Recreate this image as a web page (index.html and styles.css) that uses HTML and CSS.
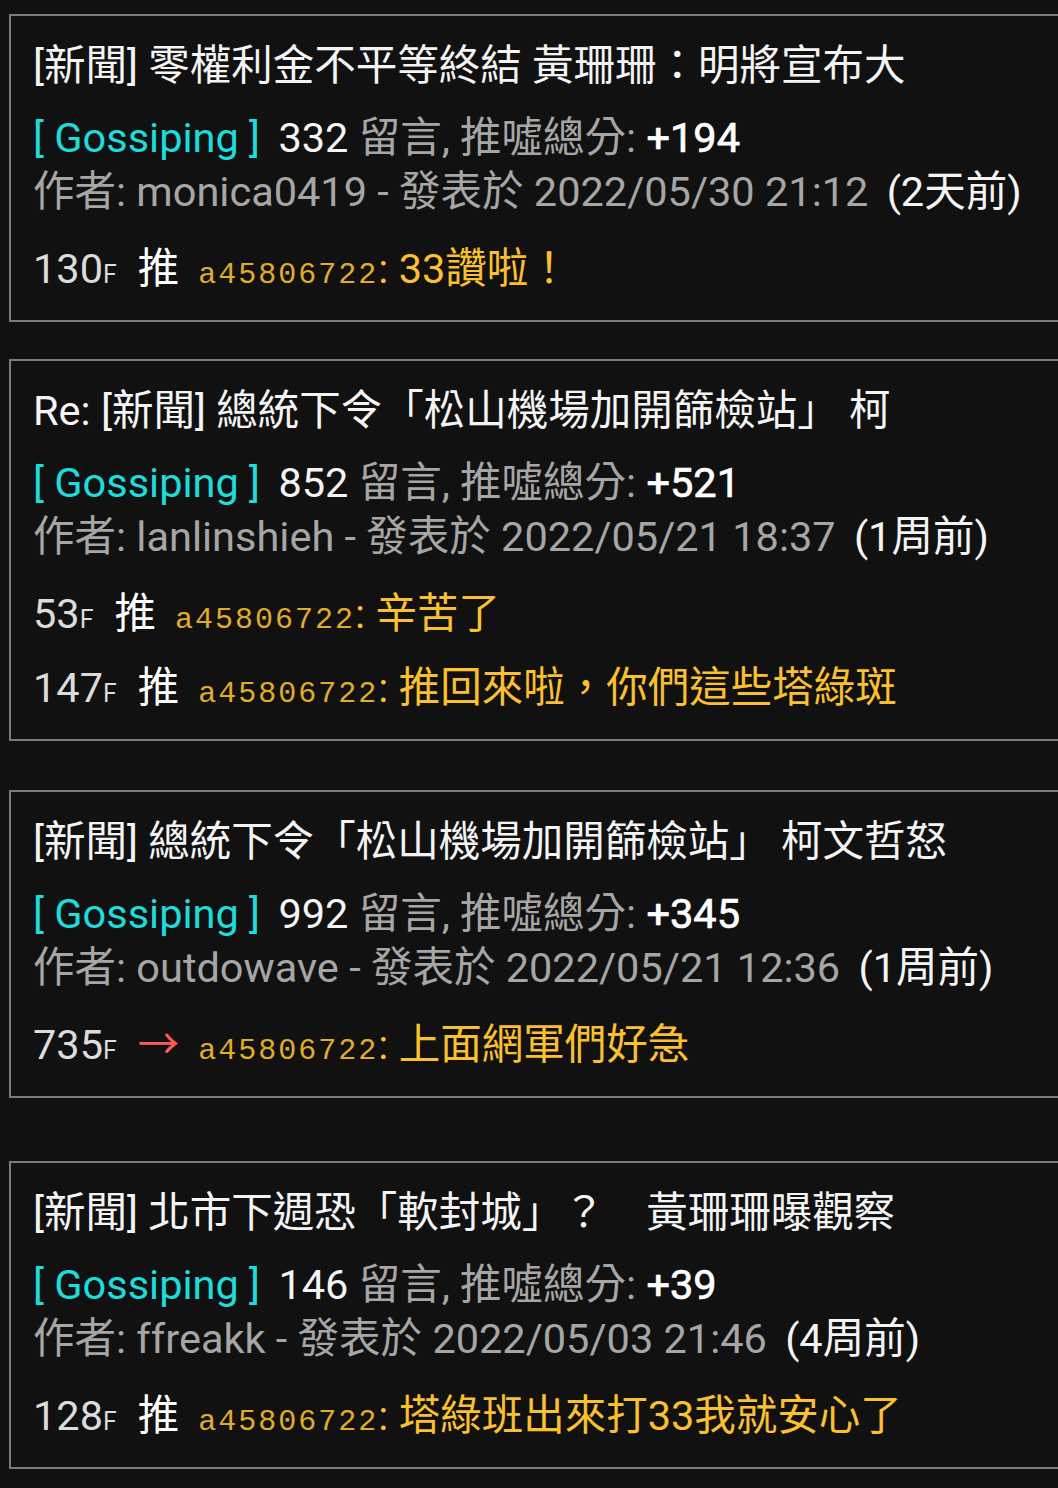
FILE: index.html
```html
<!DOCTYPE html>
<html lang="zh-Hant-TW">
<head>
  <title>PTT Comments</title>
  <link rel="stylesheet" href="styles.css">
</head>
<body>
  <div class="list">

    <div class="card">
      <div class="title">[新聞] 零權利金不平等終結 黃珊珊：明將宣布大</div>
      <div class="row"><span class="board">[ Gossiping ]</span> <span class="num">332</span> 留言, 推噓總分: <span class="score">+194</span></div>
      <div class="row author">作者: monica0419 - 發表於 2022/05/30 21:12 <span class="ago">(2天前)</span></div>
      <div class="comment"><span class="floor">130<small>F</small></span><span class="tag">推</span><span class="uid">a45806722</span><span class="msg">: 33讚啦！</span></div>
    </div>

    <div class="card gap-sm">
      <div class="title">Re: [新聞] 總統下令「松山機場加開篩檢站」 柯</div>
      <div class="row"><span class="board">[ Gossiping ]</span> <span class="num">852</span> 留言, 推噓總分: <span class="score">+521</span></div>
      <div class="row author">作者: lanlinshieh - 發表於 2022/05/21 18:37 <span class="ago">(1周前)</span></div>
      <div class="comment"><span class="floor">53<small>F</small></span><span class="tag">推</span><span class="uid">a45806722</span><span class="msg">: 辛苦了</span></div>
      <div class="comment"><span class="floor">147<small>F</small></span><span class="tag">推</span><span class="uid">a45806722</span><span class="msg">: 推回來啦，你們這些塔綠斑</span></div>
    </div>

    <div class="card gap-md">
      <div class="title">[新聞] 總統下令「松山機場加開篩檢站」 柯文哲怒</div>
      <div class="row"><span class="board">[ Gossiping ]</span> <span class="num">992</span> 留言, 推噓總分: <span class="score">+345</span></div>
      <div class="row author">作者: outdowave - 發表於 2022/05/21 12:36 <span class="ago">(1周前)</span></div>
      <div class="comment"><span class="floor">735<small>F</small></span><span class="tag arrow">→</span><span class="uid">a45806722</span><span class="msg">: 上面網軍們好急</span></div>
    </div>

    <div class="card gap-lg">
      <div class="title">[新聞] 北市下週恐「軟封城」？　黃珊珊曝觀察</div>
      <div class="row"><span class="board">[ Gossiping ]</span> <span class="num">146</span> 留言, 推噓總分: <span class="score">+39</span></div>
      <div class="row author">作者: ffreakk - 發表於 2022/05/03 21:46 <span class="ago">(4周前)</span></div>
      <div class="comment"><span class="floor">128<small>F</small></span><span class="tag">推</span><span class="uid">a45806722</span><span class="msg">: 塔綠班出來打33我就安心了</span></div>
    </div>

  </div>
</body>
</html>
```

FILE: styles.css
```css
html, body {
  margin: 0;
  overflow: hidden;
  background-color: #111111;
}
body {
  font-family: Roboto, "Noto Sans CJK TC", sans-serif;
  font-size: 41.5px;
  line-height: 54px;
  color: #a6a6a6;
}
.list {
  padding: 14px 0 20px 9px;
}
.card {
  margin-right: -30px;
  padding: 23px 22px 24px 22px;
  border: 2px solid #7c7c7c;
  white-space: nowrap;
}
.title, .row, .comment {
  height: 54px;
}
.gap-sm {
  margin-top: 37px;
}
.gap-md {
  margin-top: 49px;
}
.gap-lg {
  margin-top: 63px;
}
.title {
  color: #f4f4f4;
  margin-bottom: 18px;
}
.board {
  color: #1ddcdc;
}
.num {
  color: #f4f4f4;
  margin-left: 8px;
}
.score {
  color: #ffffff;
  -webkit-text-stroke: 0.7px #ffffff;
}
.ago {
  color: #f4f4f4;
  margin-left: 8px;
}
.author {
  margin-bottom: 23px;
}
.comment + .comment {
  margin-top: 20px;
}
.floor {
  color: #dcdcdc;
  small {
    font-size: 25px;
    line-height: 1;
  }
}
.tag {
  color: #ffffff;
  margin-left: 21px;
  margin-right: 19px;
}
.arrow {
  color: #ff5b5b;
}
.uid {
  font-family: "Liberation Mono", monospace;
  font-size: 30px;
  line-height: 1;
  letter-spacing: 2px;
  color: #e0ac2a;
}
.msg {
  color: #fbc02d;
}
```
